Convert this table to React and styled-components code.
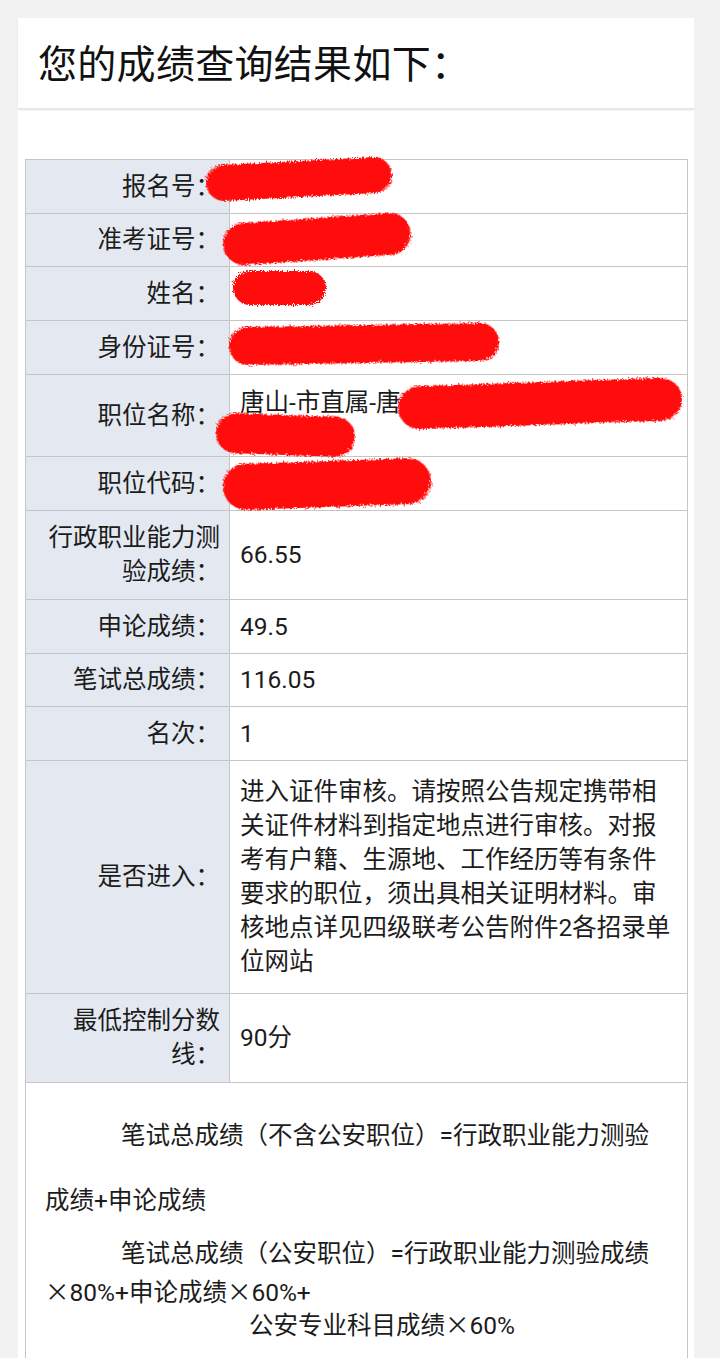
import React from 'react';
import styled, { createGlobalStyle } from 'styled-components';

const GlobalStyle = createGlobalStyle`
	html, body {
		margin: 0;
		padding: 0;
		background: #f2f2f2;
	}
	body {
		font-family: Roboto, 'Noto Sans CJK SC', sans-serif;
		color: #1c1c1c;
	}
`;

const rows = [
	{ label: '报名号：', h: 54, blobs: [{ x: -24, y: 1, w: 186, h: 36, r: -3 }] },
	{ label: '准考证号：', h: 53, blobs: [{ x: -7, y: 4, w: 188, h: 42, r: -4 }] },
	{ label: '姓名：', h: 54, blobs: [{ x: 3, y: 4, w: 93, h: 34, r: 0 }] },
	{ label: '身份证号：', h: 54, blobs: [{ x: -1, y: 4, w: 270, h: 38, r: -1 }] },
	{
		label: '职位名称：',
		h: 82,
		top: true,
		value: '唐山-市直属-唐',
		blobs: [
			{ x: 168, y: 7, w: 284, h: 43, r: -2 },
			{ x: -14, y: 40, w: 139, h: 40, r: 2 },
		],
	},
	{ label: '职位代码：', h: 54, blobs: [{ x: -7, y: 4, w: 208, h: 46, r: -2 }] },
	{ label: '行政职业能力测验成绩：', h: 89, value: '66.55' },
	{ label: '申论成绩：', h: 54, value: '49.5' },
	{ label: '笔试总成绩：', h: 53, value: '116.05' },
	{ label: '名次：', h: 54, value: '1' },
	{
		label: '是否进入：',
		h: 233,
		value:
			'进入证件审核。请按照公告规定携带相关证件材料到指定地点进行审核。对报考有户籍、生源地、工作经历等有条件要求的职位，须出具相关证明材料。审核地点详见四级联考公告附件2各招录单位网站',
	},
	{ label: '最低控制分数线：', h: 89, value: '90分' },
];

function Scribble({ x, y, w, h, r }) {
	return (
		<Blob style={{ left: x, top: y, width: w + 12, height: h + 12 }}>
			<svg width={w + 12} height={h + 12} viewBox={`0 0 ${w + 12} ${h + 12}`}>
				<rect
					x='6'
					y='6'
					width={w}
					height={h}
					rx={h / 2}
					fill='#ff0a0a'
					filter='url(#rough)'
					transform={`rotate(${r} ${w / 2 + 6} ${h / 2 + 6})`}
				/>
			</svg>
		</Blob>
	);
}

function App() {
	return (
		<Page>
			<GlobalStyle />
			<svg width='0' height='0' style={{ position: 'absolute' }}>
				<defs>
					<filter id='rough' x='-10%' y='-30%' width='120%' height='160%'>
						<feTurbulence type='fractalNoise' baseFrequency='0.8' numOctaves='2' result='n' />
						<feDisplacementMap in='SourceGraphic' in2='n' scale='7' />
					</filter>
				</defs>
			</svg>
			<Header>
				<Title>您的成绩查询结果如下：</Title>
			</Header>
			<Body>
				<Table>
					<tbody>
						{rows.map((row) => (
							<Row key={row.label} $h={row.h}>
								<Label>{row.label}</Label>
								<Value $top={row.top}>
									{row.value || '\u00a0'}
									{row.blobs && row.blobs.map((b, i) => <Scribble key={i} {...b} />)}
								</Value>
							</Row>
						))}
						<tr>
							<Notes colSpan={2}>
								<NoteLine $indent={76} $gap={0}>
									笔试总成绩（不含公安职位）=行政职业能力测验
								</NoteLine>
								<NoteLine $gap={30}>成绩+申论成绩</NoteLine>
								<NoteLine $indent={76} $gap={18}>
									笔试总成绩（公安职位）=行政职业能力测验成绩
								</NoteLine>
								<NoteLine $gap={2}>
									<Times>×</Times>80%+申论成绩<Times>×</Times>60%+
								</NoteLine>
								<NoteLine $indent={204} $gap={-4}>
									公安专业科目成绩<Times>×</Times>60%
								</NoteLine>
							</Notes>
						</tr>
					</tbody>
				</Table>
			</Body>
		</Page>
	);
}

const Page = styled.div`
	width: 676px;
	padding: 18px 0 0 18px;
	height: 1340px;
	overflow: hidden;
`;

const Header = styled.header`
	height: 90px;
	background: #ffffff;
	display: flex;
	align-items: center;
	padding-left: 20px;
	box-shadow: 0 1px 2px rgba(0, 0, 0, 0.08);
`;

const Title = styled.h1`
	margin: 0 0 4px;
	font-size: 39px;
	font-weight: 400;
	color: #111;
	letter-spacing: 0.3px;
`;

const Body = styled.main`
	margin-top: 3px;
	background: #ffffff;
	padding: 48px 6px 40px 7px;
	min-height: 1200px;
`;

const Table = styled.table`
	width: 663px;
	border-collapse: collapse;
	table-layout: fixed;
	font-size: 24.5px;
	line-height: 34px;

	td {
		border: 1px solid #c6c6c6;
	}
`;

const Row = styled.tr`
	height: ${(p) => p.$h}px;
`;

const Label = styled.td`
	width: 185px;
	background: #e4e9f1;
	text-align: right;
	vertical-align: middle;
	padding: 0 9px;
	color: #1c1c1c;
`;

const Value = styled.td`
	position: relative;
	vertical-align: ${(p) => (p.$top ? 'top' : 'middle')};
	padding: ${(p) => (p.$top ? '11px' : '0')} 10px 0 10px;
	color: #1c1c1c;
`;

const Blob = styled.div`
	position: absolute;
	margin: -6px 0 0 -6px;
	pointer-events: none;

	svg {
		display: block;
	}
`;

const Notes = styled.td`
	padding: 35px 10px 20px 19px;
	text-align: left;
`;

const NoteLine = styled.div`
	padding-left: ${(p) => p.$indent || 0}px;
	margin-top: ${(p) => p.$gap}px;
	white-space: nowrap;
	line-height: 35px;
`;

const Times = styled.span`
	font-family: 'Noto Sans CJK SC', sans-serif;
`;

export default App;
